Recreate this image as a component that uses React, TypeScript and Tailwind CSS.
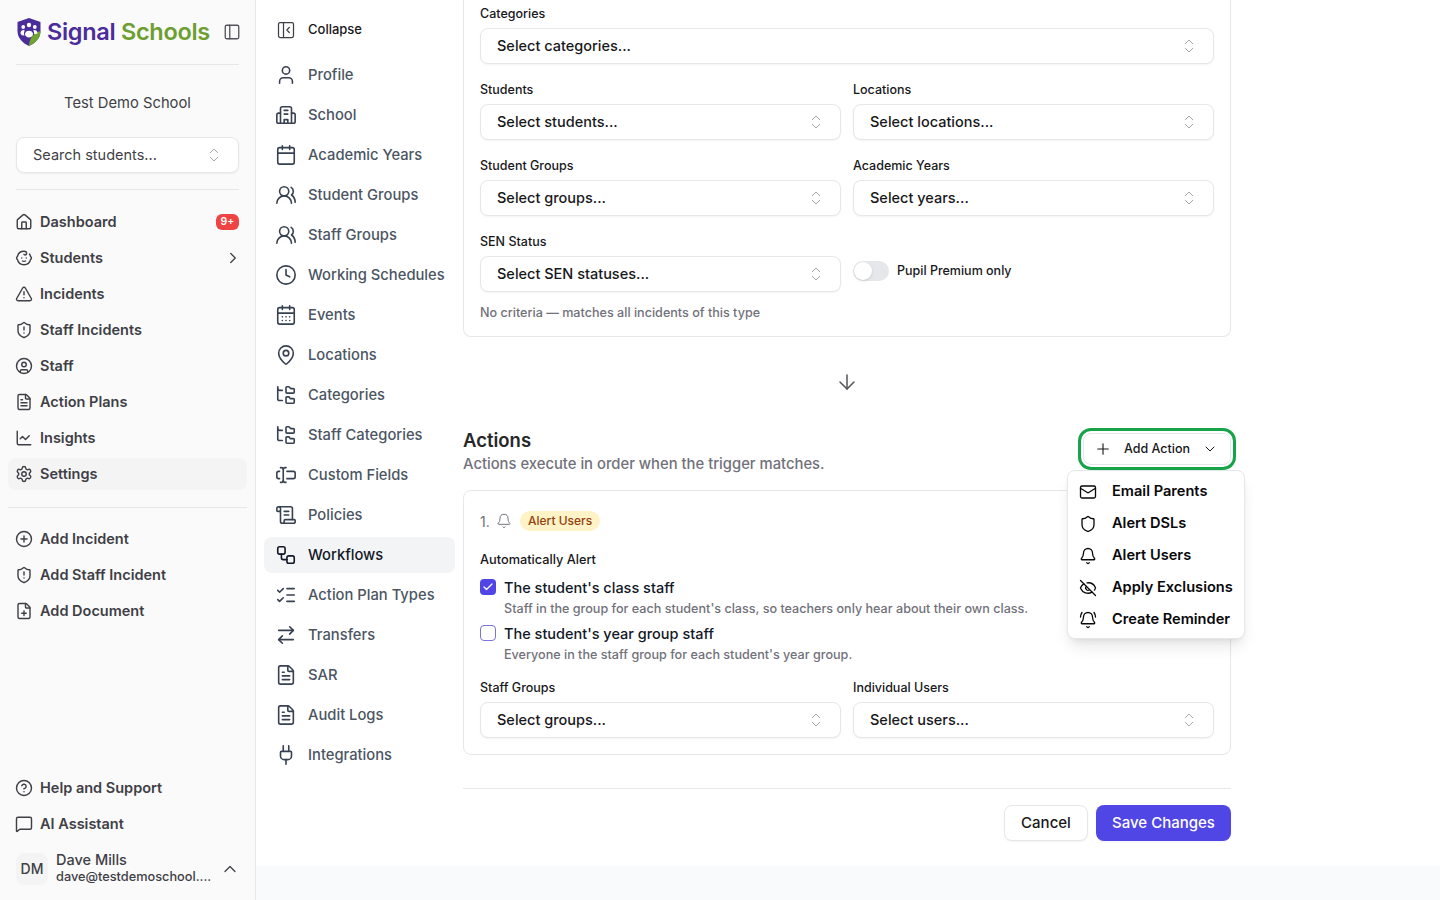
import {
  ArrowDown,
  ArrowRightLeft,
  Baby,
  Bell,
  BellRing,
  Calendar,
  CalendarDays,
  ChartLine,
  Check,
  ChevronDown,
  ChevronRight,
  ChevronsUpDown,
  ChevronUp,
  CircleHelp,
  CirclePlus,
  CircleUser,
  Clock,
  EyeOff,
  FilePlus,
  FileText,
  FolderTree,
  House,
  ListChecks,
  Mail,
  MapPin,
  MessageSquare,
  PanelLeft,
  PanelLeftClose,
  Plug,
  Plus,
  ScrollText,
  Settings,
  Shield,
  ShieldAlert,
  TextCursorInput,
  TriangleAlert,
  User,
  UsersRound,
  Workflow,
} from "lucide-react";

const font = { fontFamily: "Inter, sans-serif" };

function Logo() {
  return (
    <div className="flex items-center">
      <svg width="26" height="30" viewBox="0 0 26 30" className="shrink-0">
        <path d="M13 1 L24.5 5 V14 C24.5 21 19.5 26 13 29 C6.5 26 1.5 21 1.5 14 V5 Z" fill="#4a2c9a" />
        <path d="M24.5 14 C24.5 21 19.5 26 13 29 C13 22 17 16 24.5 14 Z" fill="#6fa52f" />
        <circle cx="13" cy="8" r="2.2" fill="#fff" />
        <circle cx="7.2" cy="10" r="1.9" fill="#fff" />
        <circle cx="18.8" cy="10" r="1.9" fill="#fff" />
        <path d="M9 17 C9 12.5 17 12.5 17 17 C17 19 15 20.5 13 20.5 C11 20.5 9 19 9 17 Z" fill="#fff" />
        <path d="M4.5 16 C4.5 12.5 8.5 12.5 8.8 13.5 C7.8 15 7.8 17 8.5 18.5 C6.5 18.5 4.5 18 4.5 16 Z" fill="#fff" />
        <path d="M21.5 16 C21.5 12.5 17.5 12.5 17.2 13.5 C18.2 15 18.2 16 18 17 C19.5 17 21.5 17 21.5 16 Z" fill="#fff" />
      </svg>
      <span className="ml-[5px] text-[23.5px] leading-[30px] font-semibold tracking-[-0.3px] whitespace-nowrap">
        <span className="text-[#4a2c9a]">Signal</span>{" "}
        <span className="text-[#6d9f30]">Schools</span>
      </span>
    </div>
  );
}

function SchoolIcon({ size = 22, className = "" }: { size?: number; className?: string }) {
  return (
    <svg
      width={size}
      height={size}
      viewBox="0 0 24 24"
      fill="none"
      stroke="currentColor"
      strokeWidth="1.75"
      strokeLinecap="round"
      strokeLinejoin="round"
      className={className}
    >
      <path d="M6 21V5a2 2 0 0 1 2-2h8a2 2 0 0 1 2 2v16" />
      <path d="M6 10H4a2 2 0 0 0-2 2v7a2 2 0 0 0 2 2h16a2 2 0 0 0 2-2v-7a2 2 0 0 0-2-2h-2" />
      <path d="M10 21v-4h4v4" />
      <path d="M10 7h4" />
      <path d="M10 11h4" />
    </svg>
  );
}

function SideItem({
  icon: Icon,
  label,
  active,
  children,
}: {
  icon: any;
  label: string;
  active?: boolean;
  children?: React.ReactNode;
}) {
  return (
    <div
      className={`flex items-center gap-[7px] rounded-lg px-2 text-[14.5px] font-semibold text-[#3f3f46] ${
        active ? "my-0.5 h-8 bg-[#f4f4f5]" : "h-9"
      }`}
    >
      <Icon size={18} strokeWidth={1.9} className="-ml-px shrink-0" />
      <span className="flex-1 truncate">{label}</span>
      {children}
    </div>
  );
}

function Sidebar() {
  return (
    <aside className="flex h-full w-[256px] shrink-0 flex-col border-r border-[#e5e7eb] bg-[#fafafa]">
      <div className="mx-4 flex h-[65px] items-center justify-between border-b border-[#e5e7eb] pb-[1px]">
        <Logo />
        <PanelLeft size={18} strokeWidth={1.75} className="mr-[-2px] text-[#52525b]" />
      </div>
      <p className="mt-[27px] text-center text-[14.75px] leading-[22px] text-[#3f3f46]">Test Demo School</p>
      <div className="mx-4 mt-[23px] flex h-9 items-center justify-between rounded-lg border border-[#e5e7eb] bg-white pr-[15px] pl-4 text-[14.5px] text-[#3f3f46] shadow-xs">
        <span>Search students...</span>
        <ChevronsUpDown size={18} strokeWidth={1.25} className="text-[#a1a1aa]" />
      </div>
      <div className="mx-4 mt-4 border-t border-[#e5e7eb]" />
      <nav className="mt-[14px] px-2">
        <SideItem icon={House} label="Dashboard">
          <span className="flex h-4 w-[23px] items-center justify-center rounded-md bg-[#ef4444] text-[10.5px] font-semibold text-white">
            9+
          </span>
        </SideItem>
        <SideItem icon={Baby} label="Students">
          <ChevronRight size={18} strokeWidth={1.75} className="-mr-[3px]" />
        </SideItem>
        <SideItem icon={TriangleAlert} label="Incidents" />
        <SideItem icon={ShieldAlert} label="Staff Incidents" />
        <SideItem icon={CircleUser} label="Staff" />
        <SideItem icon={FileText} label="Action Plans" />
        <SideItem icon={ChartLine} label="Insights" />
        <SideItem icon={Settings} label="Settings" active />
      </nav>
      <div className="mx-2 mt-[15px] border-t border-[#e5e7eb]" />
      <nav className="mt-[13px] px-2">
        <SideItem icon={CirclePlus} label="Add Incident" />
        <SideItem icon={ShieldAlert} label="Add Staff Incident" />
        <SideItem icon={FilePlus} label="Add Document" />
      </nav>
      <div className="flex-1" />
      <nav className="px-2">
        <SideItem icon={CircleHelp} label="Help and Support" />
        <SideItem icon={MessageSquare} label="AI Assistant" />
      </nav>
      <div className="mt-[10px] mb-[15px] flex items-center px-4">
        <div className="flex size-8 items-center justify-center rounded-lg bg-[#f4f4f5] text-[14px] font-medium text-[#3f3f46]">
          DM
        </div>
        <div className="ml-2 w-[156px] text-[#3f3f46]">
          <div className="text-[14.5px] leading-4 font-medium">Dave Mills</div>
          <div className="mt-px text-[12.75px] leading-4 font-medium whitespace-nowrap">dave@testdemoschool....</div>
        </div>
        <ChevronUp size={20} strokeWidth={1.5} className="-mr-px ml-auto text-[#3f3f46]" />
      </div>
    </aside>
  );
}

const settingsLinks: { icon: any; label: string; active?: boolean }[] = [
  { icon: User, label: "Profile" },
  { icon: SchoolIcon, label: "School" },
  { icon: Calendar, label: "Academic Years" },
  { icon: UsersRound, label: "Student Groups" },
  { icon: UsersRound, label: "Staff Groups" },
  { icon: Clock, label: "Working Schedules" },
  { icon: CalendarDays, label: "Events" },
  { icon: MapPin, label: "Locations" },
  { icon: FolderTree, label: "Categories" },
  { icon: FolderTree, label: "Staff Categories" },
  { icon: TextCursorInput, label: "Custom Fields" },
  { icon: ScrollText, label: "Policies" },
  { icon: Workflow, label: "Workflows", active: true },
  { icon: ListChecks, label: "Action Plan Types" },
  { icon: ArrowRightLeft, label: "Transfers" },
  { icon: FileText, label: "SAR" },
  { icon: FileText, label: "Audit Logs" },
  { icon: Plug, label: "Integrations" },
];

function SettingsNav() {
  return (
    <div className="w-[207px] shrink-0 pl-2">
      <div className="mt-3 flex h-9 items-center gap-3 pl-3 text-[13px] font-medium text-[#18181b]">
        <PanelLeftClose size={20} strokeWidth={1.5} className="text-[#3f3f46]" />
        <span>Collapse</span>
      </div>
      <div className="mt-[9px] flex w-[191px] flex-col gap-1">
        {settingsLinks.map((l) => (
          <div
            key={l.label}
            className={`flex h-9 items-center gap-[11px] rounded-lg pl-[11px] text-[14.75px] whitespace-nowrap ${
              l.active ? "bg-[#f3f4f6] font-medium text-[#111827]" : "font-[450] text-[#4b5563]"
            }`}
          >
            <l.icon size={22} strokeWidth={1.75} className={l.active ? "text-[#111827]" : "text-[#374151]"} />
            <span>{l.label}</span>
          </div>
        ))}
      </div>
    </div>
  );
}

function Select({ text }: { text: string }) {
  return (
    <div className="mt-1 flex h-9 items-center justify-between rounded-lg border border-[#e5e7eb] bg-white pr-[15px] pl-4 text-[14.5px] font-medium text-[#18181b] shadow-xs">
      <span>{text}</span>
      <ChevronsUpDown size={18} strokeWidth={1.25} className="text-[#a1a1aa]" />
    </div>
  );
}

function Field({ label, text }: { label: string; text: string }) {
  return (
    <div>
      <div className="text-[12.5px] leading-5 font-medium text-[#18181b]">{label}</div>
      <Select text={text} />
    </div>
  );
}

function CheckRow({ checked, title, sub }: { checked?: boolean; title: string; sub: string }) {
  return (
    <div className="flex gap-2">
      {checked ? (
        <div className="mt-[1px] flex size-4 items-center justify-center rounded-[4px] bg-[#4f46e5] text-white">
          <Check size={12} strokeWidth={2.5} />
        </div>
      ) : (
        <div className="mt-[1px] size-4 rounded-[4px] border border-[#7c72d8] bg-white" />
      )}
      <div>
        <div className="text-[14.5px] leading-[20px] font-medium text-[#111827]">{title}</div>
        <div className="mt-[2px] text-[12.6px] leading-[18px] font-medium text-[#71717a]">{sub}</div>
      </div>
    </div>
  );
}

const menuItems: { icon: any; label: string }[] = [
  { icon: Mail, label: "Email Parents" },
  { icon: Shield, label: "Alert DSLs" },
  { icon: Bell, label: "Alert Users" },
  { icon: EyeOff, label: "Apply Exclusions" },
  { icon: BellRing, label: "Create Reminder" },
];

function AddActionMenu() {
  return (
    <div className="relative">
      <div className="flex h-8 w-[148px] items-center rounded-lg border border-[#e5e7eb] bg-white pl-[10px] text-[12.5px] font-medium text-[#18181b] ring-[3px] ring-[#16a34a] ring-offset-2">
        <Plus size={18} strokeWidth={1.5} />
        <span className="ml-3">Add Action</span>
        <ChevronDown size={16} strokeWidth={1.5} className="absolute right-[13px]" />
      </div>
      <div className="absolute top-[37px] left-[-16px] z-10 w-[178px] rounded-lg border border-[#e5e7eb] bg-white pt-[5px] pb-[2px] shadow-lg">
        {menuItems.map((m) => (
          <div
            key={m.label}
            className="flex h-8 items-center gap-[15px] pl-[11px] text-[14.6px] font-semibold whitespace-nowrap text-[#09090b]"
          >
            <m.icon size={18} strokeWidth={1.75} />
            <span>{m.label}</span>
          </div>
        ))}
      </div>
    </div>
  );
}

function Content() {
  return (
    <div className="w-[768px]">
      <div className="rounded-b-lg border-x border-b border-[#e5e7eb] px-4 pt-1 pb-[13px]">
        <Field label="Categories" text="Select categories..." />
        <div className="mt-4 grid grid-cols-2 gap-x-3 gap-y-4">
          <Field label="Students" text="Select students..." />
          <Field label="Locations" text="Select locations..." />
          <Field label="Student Groups" text="Select groups..." />
          <Field label="Academic Years" text="Select years..." />
          <Field label="SEN Status" text="Select SEN statuses..." />
          <div className="flex items-center gap-2 pt-[18px]">
            <div className="flex h-5 w-9 items-center rounded-full bg-[#e5e7eb] pl-[1px]">
              <div className="size-[18px] rounded-full bg-white shadow-sm" />
            </div>
            <span className="text-[12.5px] font-medium text-[#18181b]">Pupil Premium only</span>
          </div>
        </div>
        <p className="mt-[11px] text-[12.6px] leading-5 font-medium text-[#71717a]">
          No criteria — matches all incidents of this type
        </p>
      </div>

      <div className="mt-[33px] flex justify-center text-[#52525b]">
        <ArrowDown size={24} strokeWidth={1.5} />
      </div>

      <div className="mt-[32px] flex items-start justify-between">
        <div>
          <h2 className="text-[18.5px] leading-7 font-semibold text-[#27272a]">Actions</h2>
          <p className="text-[14.8px] leading-5 font-medium text-[#71717a]">
            Actions execute in order when the trigger matches.
          </p>
        </div>
        <div className="mt-[7px]">
          <AddActionMenu />
        </div>
      </div>

      <div className="mt-4 rounded-lg border border-[#e5e7eb] px-4 pt-5 pb-4">
        <div className="flex h-5 items-center text-[14px] text-[#71717a]">
          <span className="w-2">1.</span>
          <Bell size={16} strokeWidth={1.5} className="ml-2" />
          <span className="ml-2 flex h-5 items-center rounded-full bg-[#fef3c7] px-2 text-[12px] font-medium text-[#92400e]">
            Alert Users
          </span>
        </div>
        <div className="mt-[19px] text-[12.75px] leading-5 font-medium text-[#18181b]">Automatically Alert</div>
        <div className="mt-2 flex flex-col gap-[6px]">
          <CheckRow
            checked
            title="The student's class staff"
            sub="Staff in the group for each student's class, so teachers only hear about their own class."
          />
          <CheckRow
            title="The student's year group staff"
            sub="Everyone in the staff group for each student's year group."
          />
        </div>
        <div className="mt-[14px] grid grid-cols-2 gap-x-3">
          <Field label="Staff Groups" text="Select groups..." />
          <Field label="Individual Users" text="Select users..." />
        </div>
      </div>

      <div className="mt-[33px] flex justify-end gap-2 border-t border-[#e5e7eb] pt-4">
        <button className="h-9 w-[84px] rounded-lg border border-[#e5e7eb] bg-white text-[15px] font-medium text-[#18181b] shadow-xs">
          Cancel
        </button>
        <button className="h-9 w-[135px] rounded-lg bg-[#4f46e5] text-[15px] font-medium text-white shadow-xs">
          Save Changes
        </button>
      </div>
    </div>
  );
}

export default function App() {
  return (
    <div className="flex h-[900px] w-[1440px] overflow-hidden bg-white" style={font}>
      <Sidebar />
      <div className="flex min-w-0 flex-1 flex-col">
        <div className="flex flex-1 overflow-hidden">
          <SettingsNav />
          <Content />
        </div>
        <div className="h-[34px] bg-[#f9fafb]" />
      </div>
    </div>
  );
}
